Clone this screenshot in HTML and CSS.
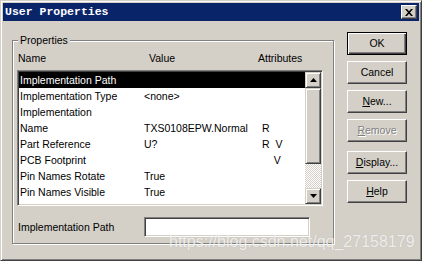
FILE: index.html
```html
<!DOCTYPE html>
<html>
<head>
<meta charset="utf-8">
<link rel="stylesheet" href="styles.css">
</head>
<body>
<div class="window">
  <div class="titlebar">
    <span class="title">User Properties</span>
    <div class="close">
      <svg width="8" height="7" viewBox="0 0 8 7"><path d="M0 0h2l2 2.2L6 0h2L5 3.5 8 7H6L4 4.8 2 7H0l3-3.5z" fill="#000"/></svg>
    </div>
  </div>
  <div class="client">
    <div class="group">
      <div class="legend">Properties</div>
      <div class="colhead">
        <span class="h-name">Name</span><span class="h-value">Value</span><span class="h-attr">Attributes</span>
      </div>
      <div class="listbox">
        <div class="rows">
          <div class="row sel"><span class="c-name">Implementation Path</span><span class="c-value"></span><span class="c-attr"></span></div>
          <div class="row"><span class="c-name">Implementation Type</span><span class="c-value">&lt;none&gt;</span><span class="c-attr"></span></div>
          <div class="row"><span class="c-name">Implementation</span><span class="c-value"></span><span class="c-attr"></span></div>
          <div class="row"><span class="c-name">Name</span><span class="c-value">TXS0108EPW.Normal</span><span class="c-attr">R</span></div>
          <div class="row"><span class="c-name">Part Reference</span><span class="c-value">U?</span><span class="c-attr">R&nbsp;&nbsp;V</span></div>
          <div class="row"><span class="c-name">PCB Footprint</span><span class="c-value"></span><span class="c-attr">&nbsp;&nbsp;&nbsp;&nbsp;V</span></div>
          <div class="row"><span class="c-name">Pin Names Rotate</span><span class="c-value">True</span><span class="c-attr"></span></div>
          <div class="row"><span class="c-name">Pin Names Visible</span><span class="c-value">True</span><span class="c-attr"></span></div>
        </div>
        <div class="scrollbar">
          <div class="sb-btn"><svg width="7" height="4" viewBox="0 0 7 4"><path d="M3.5 0L7 4H0z" fill="#000"/></svg></div>
          <div class="sb-track"><div class="sb-thumb"></div></div>
          <div class="sb-btn"><svg width="7" height="4" viewBox="0 0 7 4"><path d="M0 0h7L3.5 4z" fill="#000"/></svg></div>
        </div>
      </div>
      <div class="pathrow">
        <span class="path-label">Implementation Path</span>
        <div class="input"></div>
      </div>
    </div>
    <div class="buttons">
      <div class="btn default">OK</div>
      <div class="btn">Cancel</div>
      <div class="btn"><u>N</u>ew...</div>
      <div class="btn disabled"><u>R</u>emove</div>
      <div class="btn gap"><u>D</u>isplay...</div>
      <div class="btn"><u>H</u>elp</div>
    </div>
  </div>
  <div class="watermark">https://blog.csdn.net/qq_27158179</div>
</div>
</body>
</html>
```
FILE: styles.css
```css
html, body {
  margin: 0;
  padding: 0;
  background: #d4d0c8;
}
.window {
  position: relative;
  width: 422px;
  height: 261px;
  box-sizing: border-box;
  background: #d4d0c8;
  border: 1px solid;
  border-color: #d4d0c8 #404040 #404040 #d4d0c8;
  box-shadow: inset 1px 1px 0 #fff, inset -1px -1px 0 #808080;
  padding: 2px;
  font-family: "Liberation Sans", Arial, sans-serif;
  font-size: 10.5px;
  color: #000;
  overflow: hidden;
}
.titlebar {
  height: 18px;
  background: #0a246a;
  display: flex;
  align-items: center;
  padding-left: 2px;
}
.title {
  font-family: "Liberation Mono", "DejaVu Sans Mono", monospace;
  font-weight: bold;
  font-size: 11.5px;
  color: #fff;
  line-height: 18px;
}
.close {
  margin-left: auto;
  margin-right: 2px;
  width: 16px;
  height: 14px;
  box-sizing: border-box;
  background: #d4d0c8;
  border: 1px solid;
  border-color: #fff #404040 #404040 #fff;
  box-shadow: inset -1px -1px 0 #808080;
  display: flex;
  align-items: center;
  justify-content: center;
  padding-right: 1px;
}
.close svg { display: block; }
.client {
  display: flex;
  height: 237px;
}
.group {
  margin-left: 9px;
  margin-top: 19px;
  width: 322px;
  height: 204px;
  box-sizing: border-box;
  border: 1px solid #808080;
  box-shadow: inset 1px 1px 0 #fff, 1px 1px 0 #fff;
}
.legend {
  width: max-content;
  margin-top: -7px;
  margin-left: 5px;
  padding: 0 2px;
  background: #d4d0c8;
  line-height: 13px;
}
.colhead {
  margin-top: 5px;
  padding-left: 5px;
  line-height: 13px;
  display: flex;
}
.h-name { width: 131px; }
.h-value { width: 109px; }
.listbox {
  margin-top: 5px;
  margin-left: 4px;
  width: 306px;
  height: 136px;
  box-sizing: border-box;
  border: 1px solid;
  border-color: #808080 #fff #fff #808080;
  box-shadow: inset 1px 1px 0 #404040, inset -1px -1px 0 #d4d0c8;
  padding: 1px;
  background: #fff;
  display: flex;
}
.rows {
  width: 286px;
}
.row {
  display: flex;
  height: 16px;
  line-height: 16px;
  padding-left: 1px;
  white-space: nowrap;
}
.row.sel {
  background: #000;
  color: #fff;
}
.c-name { width: 124px; }
.c-value { width: 118px; }
.scrollbar {
  width: 16px;
  display: flex;
  flex-direction: column;
}
.sb-btn {
  width: 16px;
  height: 16px;
  box-sizing: border-box;
  background: #d4d0c8;
  border: 1px solid;
  border-color: #d4d0c8 #404040 #404040 #d4d0c8;
  box-shadow: inset 1px 1px 0 #fff, inset -1px -1px 0 #808080;
  display: flex;
  align-items: center;
  justify-content: center;
}
.sb-btn svg { display: block; }
.sb-track {
  flex: 1;
  background-color: #fff;
  background-image: conic-gradient(#d4d0c8 25%, #fff 0 50%, #d4d0c8 0 75%, #fff 0);
  background-size: 2px 2px;
}
.sb-thumb {
  height: 76px;
  box-sizing: border-box;
  background: #d4d0c8;
  border: 1px solid;
  border-color: #d4d0c8 #404040 #404040 #d4d0c8;
  box-shadow: inset 1px 1px 0 #fff, inset -1px -1px 0 #808080;
}
.pathrow {
  margin-top: 11px;
  display: flex;
  align-items: center;
  padding-left: 5px;
}
.path-label { width: 126px; }
.input {
  width: 166px;
  height: 20px;
  box-sizing: border-box;
  background: #fff;
  border: 1px solid;
  border-color: #808080 #fff #fff #808080;
  box-shadow: inset 1px 1px 0 #404040, inset -1px -1px 0 #d4d0c8;
}
.buttons {
  margin-left: 13px;
  margin-top: 11px;
  display: flex;
  flex-direction: column;
  gap: 6px;
}
.btn {
  width: 60px;
  height: 23px;
  box-sizing: border-box;
  border: 1px solid;
  border-color: #fff #404040 #404040 #fff;
  box-shadow: inset -1px -1px 0 #808080;
  display: flex;
  align-items: center;
  justify-content: center;
  line-height: 13px;
}
.btn.default {
  border-color: #000;
  box-shadow: inset 1px 1px 0 #fff, inset -1px -1px 0 #404040, inset -2px -2px 0 #808080;
}
.btn.disabled {
  color: #808080;
  text-shadow: 1px 1px 0 #fff;
}
.btn.gap { margin-top: 3px; }
.btn u { text-decoration-thickness: 1px; text-underline-offset: 1px; }
.watermark {
  position: absolute;
  left: 168px;
  top: 231px;
  font-family: "Liberation Sans", Arial, sans-serif;
  font-size: 16px;
  line-height: 20px;
  color: rgba(255, 255, 255, 0.75);
  text-shadow: 0 0 1px rgba(120, 120, 120, 0.3);
  white-space: nowrap;
}
```
